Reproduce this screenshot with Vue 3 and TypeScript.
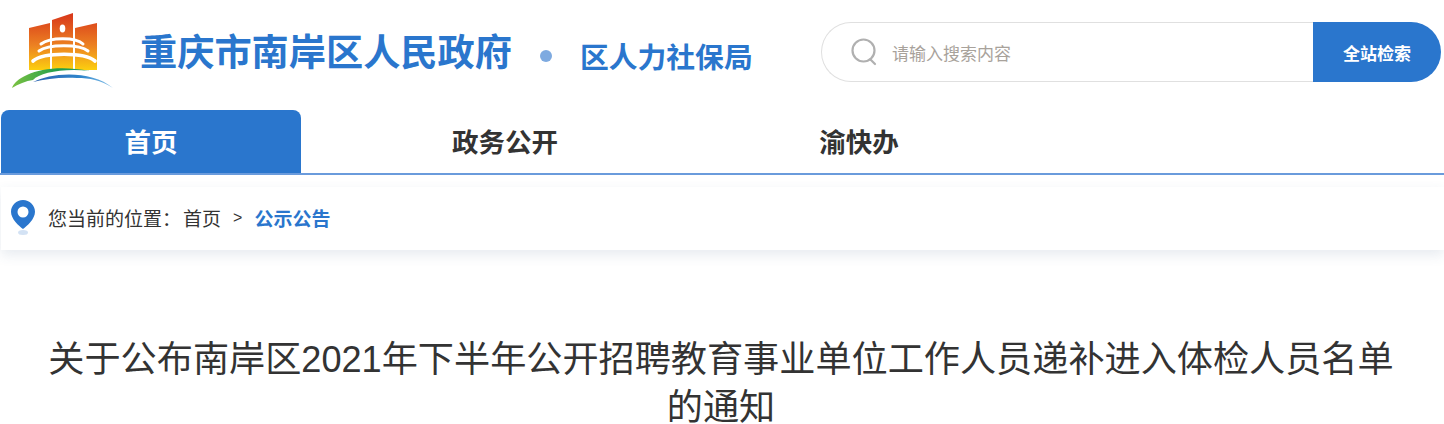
<script setup lang="ts">
const navItems = ['首页', '政务公开', '渝快办'];
</script>

<template>
  <div class="page">
    <header class="top">
      <div class="brand">
        <svg class="logo" width="104" height="80" viewBox="10 12 104 80">
          <defs>
            <linearGradient id="bld" gradientUnits="userSpaceOnUse" x1="0" y1="15" x2="0" y2="71">
              <stop offset="0" stop-color="#d93a1b" />
              <stop offset="0.55" stop-color="#ec8222" />
              <stop offset="1" stop-color="#fdd20e" />
            </linearGradient>
            <linearGradient id="grn" x1="0" y1="0" x2="1" y2="0">
              <stop offset="0" stop-color="#7cc242" />
              <stop offset="0.6" stop-color="#1f9d4d" />
              <stop offset="1" stop-color="#2f9f6a" />
            </linearGradient>
            <linearGradient id="blu" x1="0" y1="0" x2="1" y2="0">
              <stop offset="0" stop-color="#2b62b0" />
              <stop offset="0.6" stop-color="#2f86cc" />
              <stop offset="1" stop-color="#8cc4ea" />
            </linearGradient>
          </defs>
          <path d="M29 28 50 23V70H29Z" fill="url(#bld)" />
          <path d="M52 20 73 13V70H52Z" fill="url(#bld)" />
          <path d="M75 28 97 23V70H75Z" fill="url(#bld)" />
          <ellipse cx="62.500" cy="28.500" rx="2.800" ry="4" fill="#fff" />
          <g fill="none" stroke="#fff" stroke-linecap="round">
            <path d="M41 44C50 37 76 37 83 44" stroke-width="3" />
            <path d="M39 51C48 44 80 44 88 51" stroke-width="3" />
            <path d="M33 61C44 52 84 52 95 61" stroke-width="3.600" />
          </g>
          <path d="M12 88C16 76 45 62 90 71 62 68 40 73 33 80 26 81 18 84 12 88Z" fill="url(#grn)" />
          <path d="M33 82C52 72 92 70 113 88 100 80 90 78 77 78 60 77 46 79 33 82Z" fill="url(#blu)" />
        </svg>
        <span class="site-name">重庆市南岸区人民政府</span>
        <i class="dot"></i>
        <span class="dept-name">区人力社保局</span>
      </div>
      <div class="search">
        <div class="search-input">
          <svg class="search-icon" width="28" height="28" viewBox="0 0 28 28">
            <circle cx="13.500" cy="12.500" r="11" fill="none" stroke="#b0b0b0" stroke-width="2.200" />
            <path d="M20.500 21.500 25 26" fill="none" stroke="#b0b0b0" stroke-width="2.200" stroke-linecap="round" />
          </svg>
          <span class="placeholder">请输入搜索内容</span>
        </div>
        <button class="search-btn">全站检索</button>
      </div>
    </header>

    <nav class="nav">
      <a v-for="(item, i) in navItems" :key="item" class="nav-item" :class="{ active: i === 0 }">{{ item }}</a>
    </nav>

    <div class="crumbs">
      <svg class="pin" width="26" height="38" viewBox="0 0 26 38">
        <ellipse cx="13" cy="33.500" rx="5" ry="2.500" fill="#d3e2f4" />
        <path fill-rule="evenodd" fill="#2a76cd" d="M13 1C6.400 1 1 6.300 1 12.700 1 20 9 27 13 30 17 27 25 20 25 12.700 25 6.300 19.600 1 13 1ZM13 7.500A5.500 5.500 0 1 1 13 18.500 5.500 5.500 0 1 1 13 7.500Z" />
      </svg>
      <span class="crumb-text">您当前的位置：</span>
      <span class="crumb-home">首页</span>
      <span class="crumb-sep">&gt;</span>
      <span class="crumb-now">公示公告</span>
    </div>

    <h1 class="title">关于公布南岸区2021年下半年公开招聘教育事业单位工作人员递补进入体检人员名单的通知</h1>
  </div>
</template>

<style>
html, body {
  margin: 0;
  overflow: hidden;
  background: #fff;
}
</style>

<style scoped>
.page {
  width: 1444px;
  height: 424px;
  overflow: hidden;
  font-family: "Liberation Sans", "Noto Sans CJK SC", sans-serif;
  color: #333;
}

.top {
  height: 110px;
  display: flex;
  justify-content: space-between;
  box-sizing: border-box;
  padding: 12px 3px 0 10px;
}

.brand {
  display: flex;
  align-items: flex-start;
}

.site-name {
  margin: 21px 0 0 26px;
  font-size: 37.200px;
  line-height: 40px;
  font-weight: 700;
  color: #2a76cd;
}

.dot {
  width: 12px;
  height: 12px;
  border-radius: 50%;
  background: #7eaae0;
  margin: 38px 30px 0 28px;
}

.dept-name {
  margin: 30px 0 0 -2px;
  font-size: 28.800px;
  line-height: 32px;
  font-weight: 700;
  color: #2a76cd;
}

.search {
  width: 620px;
  height: 60px;
  margin-top: 10px;
  display: flex;
}

.search-input {
  flex: 1;
  display: flex;
  align-items: center;
  box-sizing: border-box;
  border: 1px solid #e0e0e0;
  border-right: 0;
  border-radius: 30px 0 0 30px;
  padding-left: 28px;
}

.placeholder {
  margin-left: 14px;
  font-size: 17px;
  color: #a8a29b;
}

.search-btn {
  width: 128px;
  border: 0;
  padding: 0;
  background: #2a76cd;
  color: #fff;
  font: 700 17px "Liberation Sans", "Noto Sans CJK SC", sans-serif;
  border-radius: 0 30px 30px 0;
}

.nav {
  height: 65px;
  box-sizing: border-box;
  border-bottom: 2px solid #6a9bdc;
  display: flex;
  gap: 54px;
  padding-left: 1px;
}

.nav-item {
  width: 300px;
  height: 63px;
  line-height: 66px;
  text-align: center;
  font-size: 26.500px;
  font-weight: 700;
  color: #333;
}

.nav-item.active {
  background: #2a76cd;
  color: #fff;
  border-radius: 8px 8px 0 0;
}

.crumbs {
  height: 63px;
  box-sizing: border-box;
  margin: 12px 0 0 1px;
  padding: 0 0 2px 9px;
  display: flex;
  align-items: center;
  background: #fff;
  box-shadow: 0 5px 12px rgba(60, 90, 130, 0.12);
  font-size: 19px;
}

.pin {
  margin-right: 12px;
}

.crumb-home {
  margin-left: 2px;
}

.crumb-sep {
  margin: 0 12px;
  font-size: 16px;
}

.crumb-now {
  font-weight: 700;
  color: #2a76cd;
}

.title {
  margin: 86px 0 0;
  padding: 0 42px 0 40px;
  font-size: 36.150px;
  font-weight: 400;
  line-height: 48px;
  text-align: center;
  color: #333;
}
</style>
